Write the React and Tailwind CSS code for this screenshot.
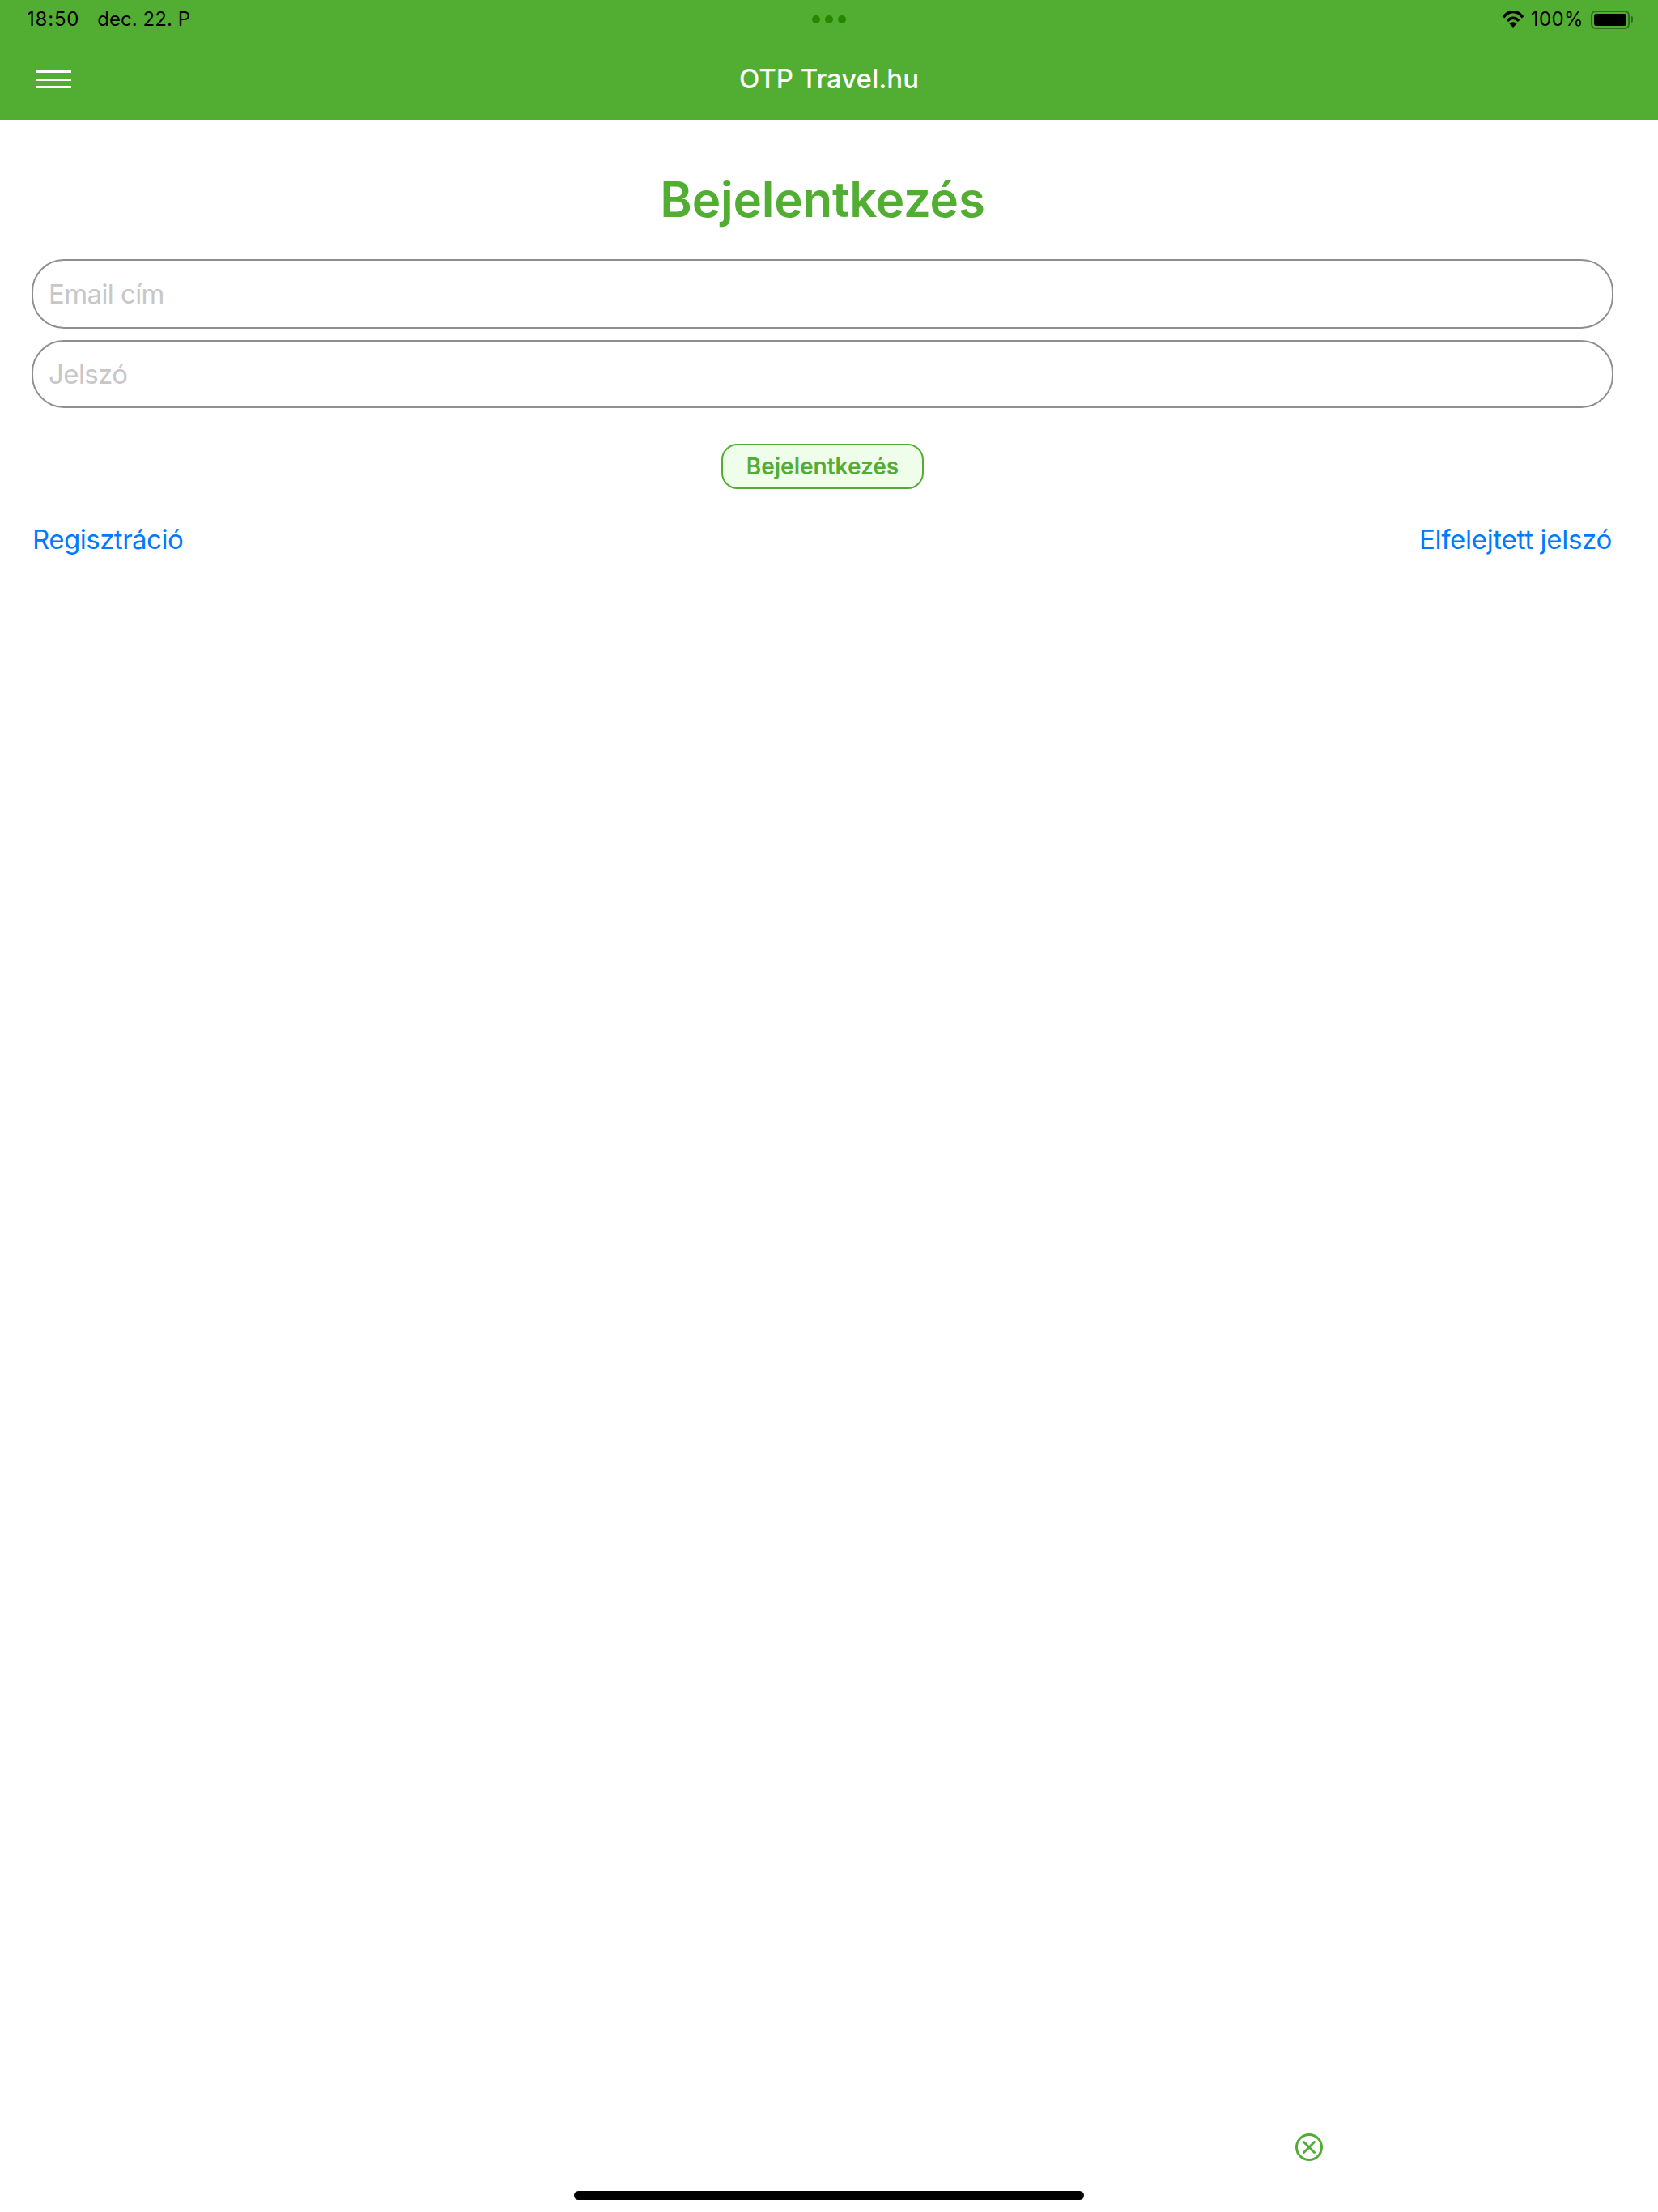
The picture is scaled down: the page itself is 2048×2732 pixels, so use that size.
export default function App() {
  const font = { fontFamily: 'Inter, "Liberation Sans", sans-serif' };
  return (
    <div className="relative h-[2732px] w-[2048px] overflow-hidden bg-white font-['Inter',sans-serif]">
      <header className="h-[148px] bg-[#52ae32] flex flex-col">
        <div className="relative h-[48px] flex items-center justify-between pl-[33px] pr-[31px] text-black text-[24px] leading-[48px]">
          <div className="flex gap-[22px]">
            <span className="tracking-[0.8px]">18:50</span>
            <span className="tracking-[0.05px]">dec. 22. P</span>
          </div>
          <div className="absolute left-[1003px] top-[19px] flex gap-[6px]">
            <span className="w-[10px] h-[10px] rounded-full bg-[#268700]" />
            <span className="w-[10px] h-[10px] rounded-full bg-[#268700]" />
            <span className="w-[10px] h-[10px] rounded-full bg-[#268700]" />
          </div>
          <div className="flex items-center gap-[8px]">
            <svg width="28" height="22" viewBox="0 0 28 22" fill="none" className="mt-[-1px]">
              <path d="M2 8.5C9-1 19-1 26 8.5" stroke="#000" strokeWidth="3.6" />
              <path d="M7 13C11 8 17 8 21 13" stroke="#000" strokeWidth="3.4" />
              <path d="M9.5 16.5C12 13.6 16 13.6 18.5 16.5L14 21Z" fill="#000" />
            </svg>
            <span className="mr-[1px] tracking-[0.4px]">100%</span>
            <div className="flex items-center gap-[2px]">
              <div className="w-[48px] h-[23px] rounded-[6px] border-2 border-[#2f6e1c] p-[2px] flex">
                <div className="flex-1 rounded-[3px] bg-black" />
              </div>
              <div className="w-[2px] h-[8px] rounded-r-full bg-[#2f6e1c]" />
            </div>
          </div>
        </div>
        <div className="relative flex-1 flex items-center justify-center">
          <div className="absolute left-[45px] top-[39px] w-[43px] flex flex-col gap-[6.5px]">
            <span className="h-[3px] bg-white" />
            <span className="h-[3px] bg-white" />
            <span className="h-[3px] bg-white" />
          </div>
          <h1 className="text-[33px] font-medium text-white">OTP Travel.hu</h1>
        </div>
      </header>
      <main className="pl-[39px] pr-[55px] flex flex-col">
        <h2 className="mt-[61px] h-[74px] mb-[1px] text-center text-[60px] leading-[74px] font-semibold text-[#52ae32] tracking-[-0.2px]">Bejelentkezés</h2>
        <input placeholder="Email cím" readOnly className="mt-[36px] h-[86px] w-full rounded-[40px] border-2 border-[#8e8e93] px-[19px] text-[33px] tracking-[-0.6px] placeholder:text-[#c7c7c7] outline-none bg-white" style={font} />
        <input placeholder="Jelszó" readOnly className="mt-[14px] h-[84px] w-full rounded-[40px] border-2 border-[#8e8e93] px-[19px] text-[33px] tracking-[-0.6px] placeholder:text-[#c7c7c7] outline-none bg-white" style={font} />
        <div className="mt-[44px] flex justify-center">
          <button className="w-[250px] h-[56px] rounded-[20px] border-2 border-[#52ae32] bg-[#effdeb] text-[28px] font-semibold text-[#52ae32]">Bejelentkezés</button>
        </div>
        <div className="mt-[40px] pr-[2px] flex justify-between text-[33px] tracking-[-0.3px] leading-[44px] text-[#007aff]">
          <a className="ml-[1px] tracking-[-0.5px]">Regisztráció</a>
          <a>Elfelejtett jelszó</a>
        </div>
      </main>
      <svg className="absolute left-[1599px] top-[2634px]" width="36" height="36" viewBox="0 0 36 36" fill="none" stroke="#52ae32">
        <circle cx="18" cy="18" r="15.5" strokeWidth="3" />
        <path d="M11.5 11.5L24.5 24.5M24.5 11.5L11.5 24.5" strokeWidth="3" strokeLinecap="round" />
      </svg>
      <div className="absolute left-[709px] top-[2706px] w-[630px] h-[11px] rounded-full bg-black" />
    </div>
  );
}
